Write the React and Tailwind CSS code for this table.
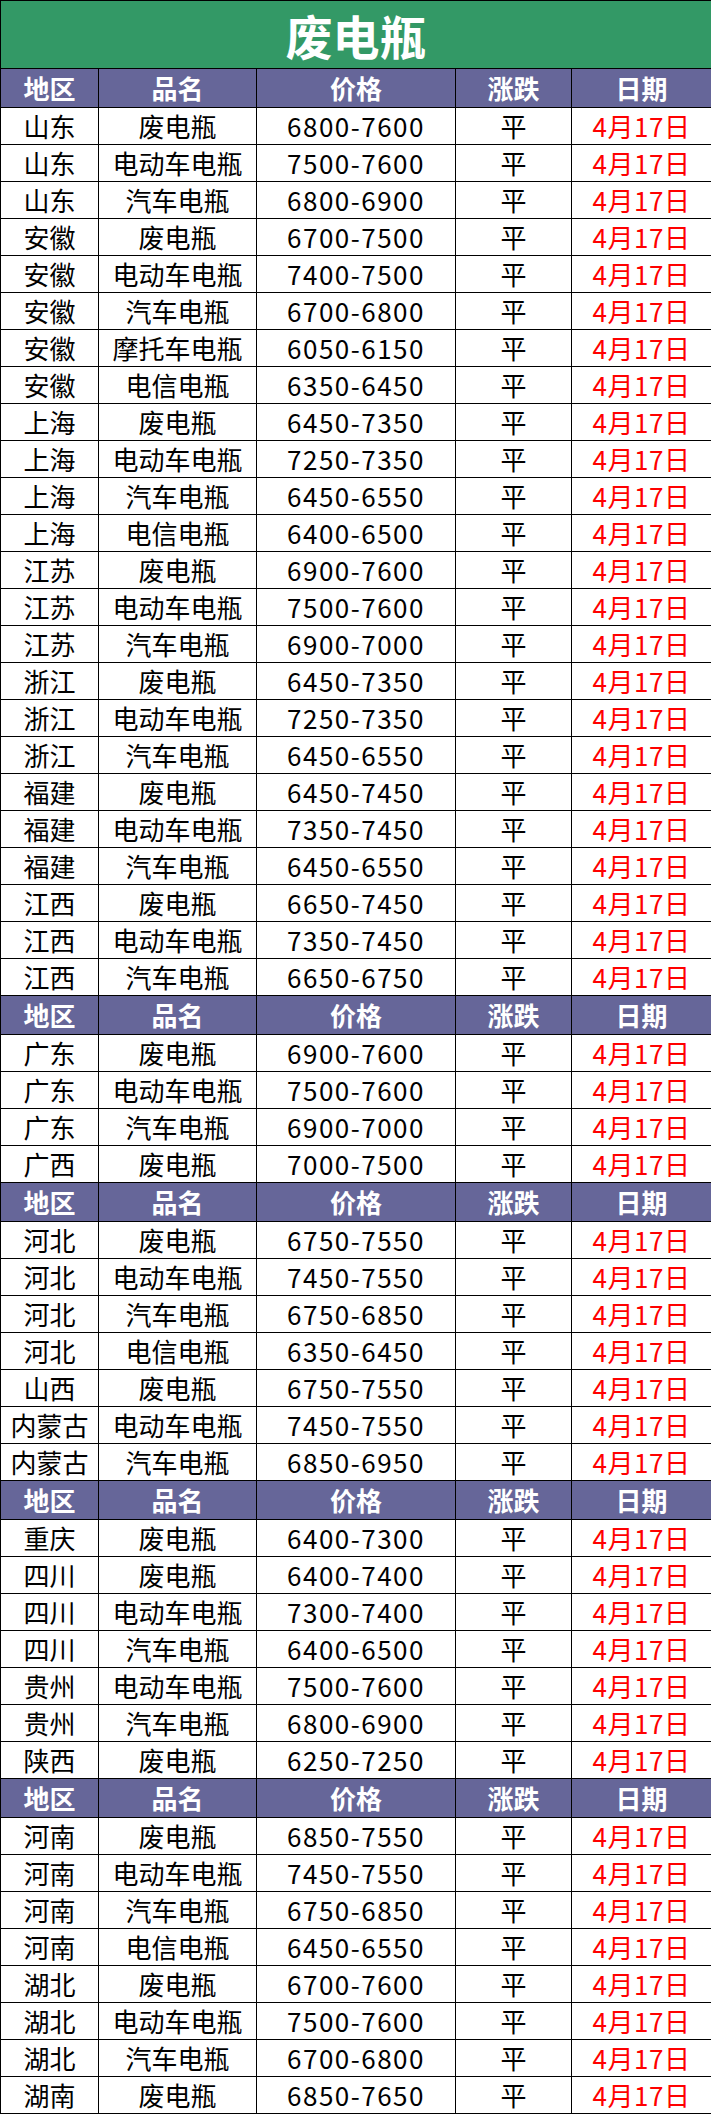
import React from "react";

const sections = [
  [
    ["山东", "废电瓶", "6800-7600"],
    ["山东", "电动车电瓶", "7500-7600"],
    ["山东", "汽车电瓶", "6800-6900"],
    ["安徽", "废电瓶", "6700-7500"],
    ["安徽", "电动车电瓶", "7400-7500"],
    ["安徽", "汽车电瓶", "6700-6800"],
    ["安徽", "摩托车电瓶", "6050-6150"],
    ["安徽", "电信电瓶", "6350-6450"],
    ["上海", "废电瓶", "6450-7350"],
    ["上海", "电动车电瓶", "7250-7350"],
    ["上海", "汽车电瓶", "6450-6550"],
    ["上海", "电信电瓶", "6400-6500"],
    ["江苏", "废电瓶", "6900-7600"],
    ["江苏", "电动车电瓶", "7500-7600"],
    ["江苏", "汽车电瓶", "6900-7000"],
    ["浙江", "废电瓶", "6450-7350"],
    ["浙江", "电动车电瓶", "7250-7350"],
    ["浙江", "汽车电瓶", "6450-6550"],
    ["福建", "废电瓶", "6450-7450"],
    ["福建", "电动车电瓶", "7350-7450"],
    ["福建", "汽车电瓶", "6450-6550"],
    ["江西", "废电瓶", "6650-7450"],
    ["江西", "电动车电瓶", "7350-7450"],
    ["江西", "汽车电瓶", "6650-6750"],
  ],
  [
    ["广东", "废电瓶", "6900-7600"],
    ["广东", "电动车电瓶", "7500-7600"],
    ["广东", "汽车电瓶", "6900-7000"],
    ["广西", "废电瓶", "7000-7500"],
  ],
  [
    ["河北", "废电瓶", "6750-7550"],
    ["河北", "电动车电瓶", "7450-7550"],
    ["河北", "汽车电瓶", "6750-6850"],
    ["河北", "电信电瓶", "6350-6450"],
    ["山西", "废电瓶", "6750-7550"],
    ["内蒙古", "电动车电瓶", "7450-7550"],
    ["内蒙古", "汽车电瓶", "6850-6950"],
  ],
  [
    ["重庆", "废电瓶", "6400-7300"],
    ["四川", "废电瓶", "6400-7400"],
    ["四川", "电动车电瓶", "7300-7400"],
    ["四川", "汽车电瓶", "6400-6500"],
    ["贵州", "电动车电瓶", "7500-7600"],
    ["贵州", "汽车电瓶", "6800-6900"],
    ["陕西", "废电瓶", "6250-7250"],
  ],
  [
    ["河南", "废电瓶", "6850-7550"],
    ["河南", "电动车电瓶", "7450-7550"],
    ["河南", "汽车电瓶", "6750-6850"],
    ["河南", "电信电瓶", "6450-6550"],
    ["湖北", "废电瓶", "6700-7600"],
    ["湖北", "电动车电瓶", "7500-7600"],
    ["湖北", "汽车电瓶", "6700-6800"],
    ["湖南", "废电瓶", "6850-7650"],
  ],
];

const headers = ["地区", "品名", "价格", "涨跌", "日期"];

function HeaderRow() {
  return (
    <tr className="h-[39px] bg-[#666699]">
      {headers.map((h) => (
        <td
          key={h}
          className="border border-black p-0 text-center align-middle text-[26px] font-bold leading-none text-white"
        >
          {h}
        </td>
      ))}
    </tr>
  );
}

function DataRow({ row }) {
  return (
    <tr className="h-[37px] bg-white">
      <td className="border border-black p-0 text-center align-middle text-[26px] leading-none text-black whitespace-nowrap">
        {row[0]}
      </td>
      <td className="border border-black p-0 text-center align-middle text-[26px] leading-none text-black whitespace-nowrap">
        {row[1]}
      </td>
      <td className="border border-black p-0 text-center align-middle text-[26px] leading-none tracking-[1.5px] text-black whitespace-nowrap">
        {row[2]}
      </td>
      <td className="border border-black p-0 text-center align-middle text-[26px] leading-none text-black">
        平
      </td>
      <td className="border border-black p-0 text-center align-middle text-[26px] leading-none tracking-[0.6px] text-[#ff0000] whitespace-nowrap">
        4月17日
      </td>
    </tr>
  );
}

export default function App() {
  return (
    <div
      className="w-[711px] bg-white"
      style={{ fontFamily: '"Noto Sans CJK SC", "Noto Sans", sans-serif' }}
    >
      <table className="w-[711px] table-fixed border-collapse">
        <colgroup>
          <col className="w-[98px]" />
          <col className="w-[158px]" />
          <col className="w-[199px]" />
          <col className="w-[116px]" />
          <col className="w-[140px]" />
        </colgroup>
        <tbody>
          <tr className="h-[68px] bg-[#339966]">
            <td
              colSpan={5}
              className="border border-black p-0 text-center align-middle text-[47px] font-bold leading-none text-white"
            >
              废电瓶
            </td>
          </tr>
          {sections.map((sec, si) => (
            <React.Fragment key={si}>
              <HeaderRow />
              {sec.map((row, ri) => (
                <DataRow key={ri} row={row} />
              ))}
            </React.Fragment>
          ))}
        </tbody>
      </table>
    </div>
  );
}
